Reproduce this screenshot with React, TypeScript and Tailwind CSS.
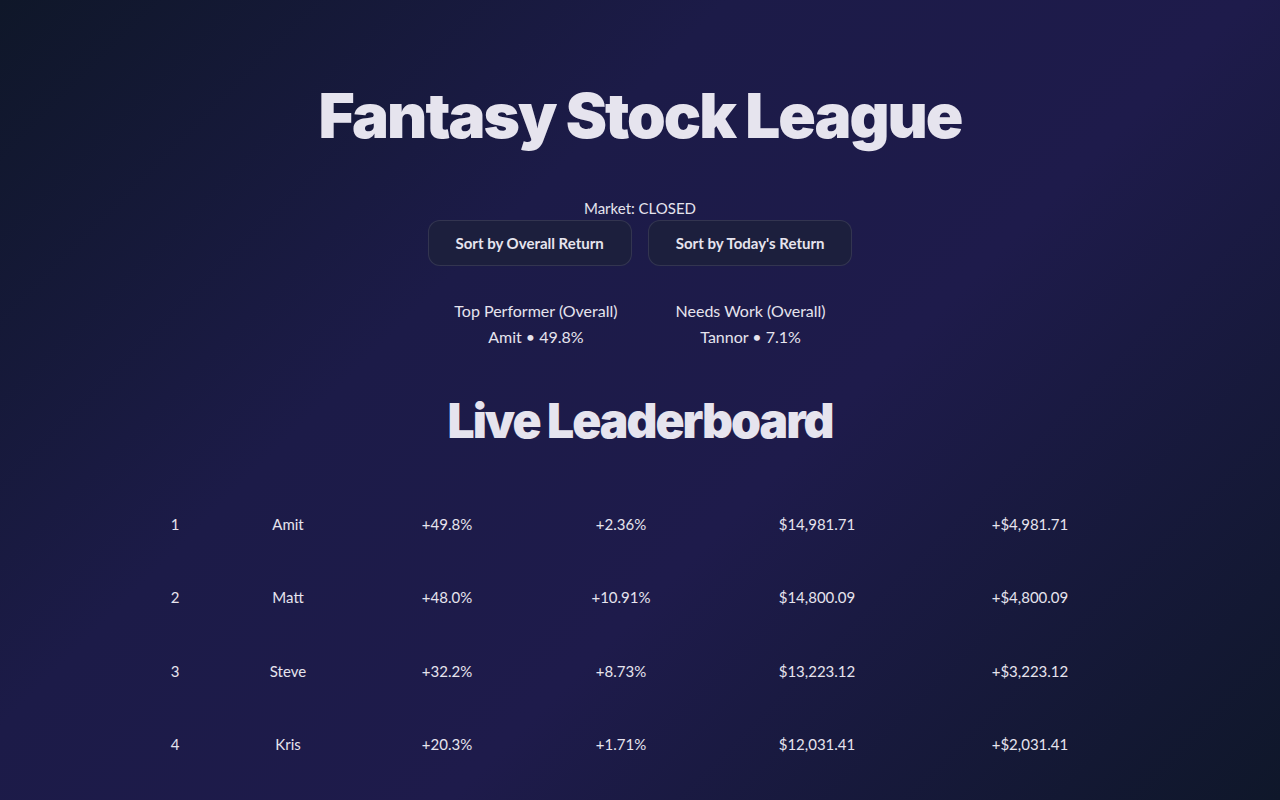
import React from 'react'

type Row = {
  rank: number
  name: string
  overall: string
  today: string
  value: string
  gain: string
}

const rows: Row[] = [
  { rank: 1, name: 'Amit', overall: '+49.8%', today: '+2.36%', value: '$14,981.71', gain: '+$4,981.71' },
  { rank: 2, name: 'Matt', overall: '+48.0%', today: '+10.91%', value: '$14,800.09', gain: '+$4,800.09' },
  { rank: 3, name: 'Steve', overall: '+32.2%', today: '+8.73%', value: '$13,223.12', gain: '+$3,223.12' },
  { rank: 4, name: 'Kris', overall: '+20.3%', today: '+1.71%', value: '$12,031.41', gain: '+$2,031.41' },
]

const colWidths = ['w-[70px]', 'w-[156px]', 'w-[162px]', 'w-[186px]', 'w-[206px]', 'w-[220px]']

const App = () => {
  return (
    <div className="min-h-screen w-full bg-[linear-gradient(135deg,#0f1729_0%,#1c1b48_35%,#1e1b4b_60%,#0f172a_100%)] text-[#e6e4ee] font-['Lato','Open_Sans',sans-serif]">
      <div className="flex flex-col items-center pt-[76px]">
        <h1 className="font-['Inter',sans-serif] text-[62px] leading-[80px] font-black tracking-[-2px]">Fantasy Stock League</h1>

        <p className="mt-[42px] text-[15px] leading-5">Market: CLOSED</p>

        <div className="mt-[2px] flex gap-4">
          <button className="h-[46px] px-[27px] rounded-xl border border-white/10 bg-[#1c1f3d] text-[15px] font-bold text-[#e6e4ee]">
            Sort by Overall Return
          </button>
          <button className="h-[46px] px-[27px] rounded-xl border border-white/10 bg-[#1c1f3d] text-[15px] font-bold text-[#e6e4ee]">
            Sort by Today's Return
          </button>
        </div>

        <div className="mt-[32px] flex gap-[58px] text-[16px] leading-[26px]">
          <div className="flex flex-col items-center">
            <span>Top Performer (Overall)</span>
            <span>Amit • 49.8%</span>
          </div>
          <div className="flex flex-col items-center">
            <span>Needs Work (Overall)</span>
            <span>Tannor • 7.1%</span>
          </div>
        </div>

        <h2 className="mt-[43px] font-['Inter',sans-serif] text-[48px] leading-[56px] font-black tracking-[-2px]">Live Leaderboard</h2>

        <table className="mt-[38px] w-[1000px] text-center text-[15px]">
          <tbody>
            {rows.map((r) => (
              <tr key={r.rank} className="h-[73.5px]">
                <td className={colWidths[0]}>{r.rank}</td>
                <td className={colWidths[1]}>{r.name}</td>
                <td className={colWidths[2]}>{r.overall}</td>
                <td className={colWidths[3]}>{r.today}</td>
                <td className={colWidths[4]}>{r.value}</td>
                <td className={colWidths[5]}>{r.gain}</td>
              </tr>
            ))}
          </tbody>
        </table>
      </div>
    </div>
  )
}

export default App
